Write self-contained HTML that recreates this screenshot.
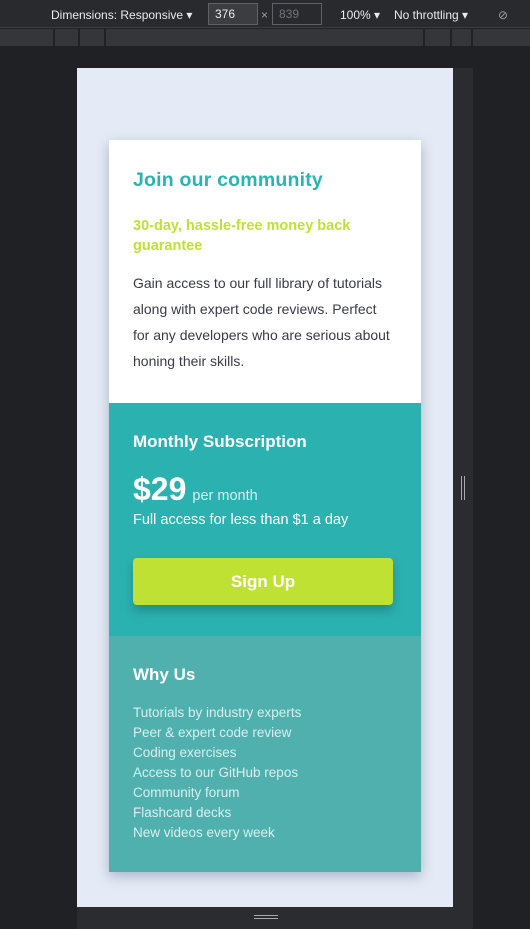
<!DOCTYPE html>
<html><head><meta charset="utf-8"><style>
*{margin:0;padding:0;box-sizing:border-box}
body{width:530px;height:929px;background:#202124;position:relative;overflow:hidden;font-family:"Liberation Sans",sans-serif}
.tb{position:absolute;left:0;top:0;width:530px;height:28px;background:#292a2d;border-bottom:1px solid #3c3d40;color:#e8eaed;font-size:12px}
.tb span{position:absolute;top:8px}
.inp{position:absolute;top:3px;height:22px;border:1px solid #5f6368;padding:3px 6px;font-size:12px}
.rb{position:absolute;left:0;top:29px;width:530px;height:17px;background:#35363a}
.rb i{position:absolute;top:0;width:2px;height:17px;background:#202124}
.vp{position:absolute;left:77px;top:68px;width:376px;height:839px;background:#e4ebf6}
.rs{position:absolute;left:453px;top:68px;width:20px;height:839px;background:#2b2c2f}
.bs{position:absolute;left:77px;top:907px;width:396px;height:22px;background:#2b2c2f}
.card{position:absolute;left:109px;top:140px;width:312px;box-shadow:0 4px 12px rgba(60,80,110,.35)}
.s1{background:#fff;height:263px;padding:28px 24px}
.s1 h1{color:#2bb3b1;font-size:19.5px;font-weight:700;letter-spacing:.2px;line-height:24px}
.s1 h2{color:#bfe133;font-size:14.5px;font-weight:700;line-height:20px;margin-top:24px}
.s1 p{color:#3a3a4a;font-size:14px;line-height:26px;margin-top:14px;width:258px}
.s2{background:#2bb2b0;height:233px;padding:29px 28px 28px 24px;color:#fff}
.s2 h3{font-size:17px;font-weight:700}
.price{margin-top:19px;display:flex;align-items:baseline}
.price b{font-size:32px}
.price span{font-size:14.5px;color:#d2f0ee;margin-left:6px}
.s2 .f{font-size:14.5px;margin-top:4px}
.btn{margin-top:30px;height:47px;background:#bfe133;border-radius:4px;box-shadow:0 6px 10px rgba(0,60,60,.3);text-align:center;line-height:47px;font-weight:700;font-size:17px}
.s3{background:#50b0ae;height:236px;padding:29px 24px;color:#fff}
.s3 h3{font-size:17px;font-weight:700}
.s3 ul{list-style:none;margin-top:18px;color:#d8efee;font-size:13.5px;line-height:20px}
</style></head><body>
<div class="tb"><span style="left:51px">Dimensions: Responsive ▾</span>
<div class="inp" style="left:208px;width:50px;background:#3c3d40">376</div><span style="left:261px;color:#9aa0a6">×</span>
<div class="inp" style="left:272px;width:50px;color:#70757a">839</div>
<span style="left:340px">100% ▾</span><span style="left:394px">No throttling ▾</span>
<span style="left:498px;color:#9aa0a6">⊘</span></div>
<div class="rb"><i style="left:53px"></i><i style="left:78px"></i><i style="left:104px"></i><i style="left:423px"></i><i style="left:450px"></i><i style="left:471px"></i></div>
<div class="vp"></div><div class="rs"><div style="position:absolute;left:8px;top:408px;width:4px;height:24px;border-left:1px solid #aaa;border-right:1px solid #aaa"></div></div>
<div class="bs"><div style="position:absolute;left:177px;top:8px;width:24px;height:4px;border-top:1px solid #aaa;border-bottom:1px solid #aaa"></div></div>
<div class="card">
<div class="s1"><h1>Join our community</h1><h2>30-day, hassle-free money back guarantee</h2>
<p>Gain access to our full library of tutorials along with expert code reviews. Perfect for any developers who are serious about honing their skills.</p></div>
<div class="s2"><h3>Monthly Subscription</h3><div class="price"><b>$29</b><span>per month</span></div>
<div class="f">Full access for less than $1 a day</div><div class="btn">Sign Up</div></div>
<div class="s3"><h3>Why Us</h3><ul><li>Tutorials by industry experts</li><li>Peer &amp; expert code review</li><li>Coding exercises</li><li>Access to our GitHub repos</li><li>Community forum</li><li>Flashcard decks</li><li>New videos every week</li></ul></div>
</div>
</body></html>
